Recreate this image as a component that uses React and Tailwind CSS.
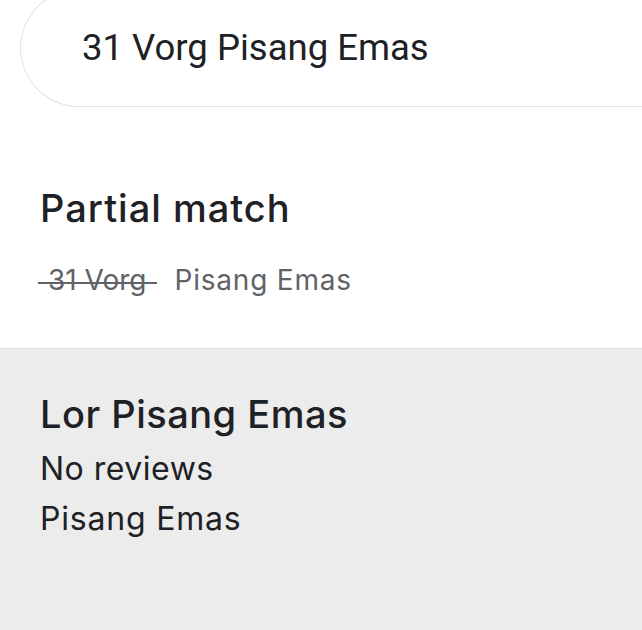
export default function App() {
  return (
    <div className="w-[642px] h-[630px] bg-white overflow-hidden text-[#202124]" style={{ fontFamily: "Inter, 'Open Sans', sans-serif" }}>
      <div className="pl-5 -mt-[11px]">
        <div className="h-[118px] rounded-l-full border border-r-0 border-[#dfe1e5] flex items-center pl-[61px] text-[36.5px]" style={{ fontFamily: "Roboto, sans-serif" }}>
          31 Vorg Pisang Emas
        </div>
      </div>
      <div className="px-10 pt-[79px]">
        <h2 className="text-[38px] leading-[44px] font-medium tracking-[1px]">Partial match</h2>
        <div className="mt-[32px] flex items-center text-[28px] leading-[36px] text-[#5f6368]">
          <span className="relative -ml-[2px] px-[10px]">
            31 Vorg
            <span className="absolute left-0 right-0 top-[20px] h-[2px] bg-[#5f6368]"></span>
          </span>
          <span className="ml-[18px] tracking-[0.8px]">Pisang Emas</span>
        </div>
      </div>
      <div className="mt-[50px] border-t border-[#dadce0] bg-[#ececec] h-[300px] px-10 pt-[43px]">
        <div className="text-[38px] leading-[44px] font-medium tracking-[0.5px]">Lor Pisang Emas</div>
        <div className="mt-[8px] text-[32px] leading-[50px] tracking-[0.5px]">No reviews</div>
        <div className="text-[32px] leading-[50px] tracking-[0.8px]">Pisang Emas</div>
      </div>
    </div>
  );
}
